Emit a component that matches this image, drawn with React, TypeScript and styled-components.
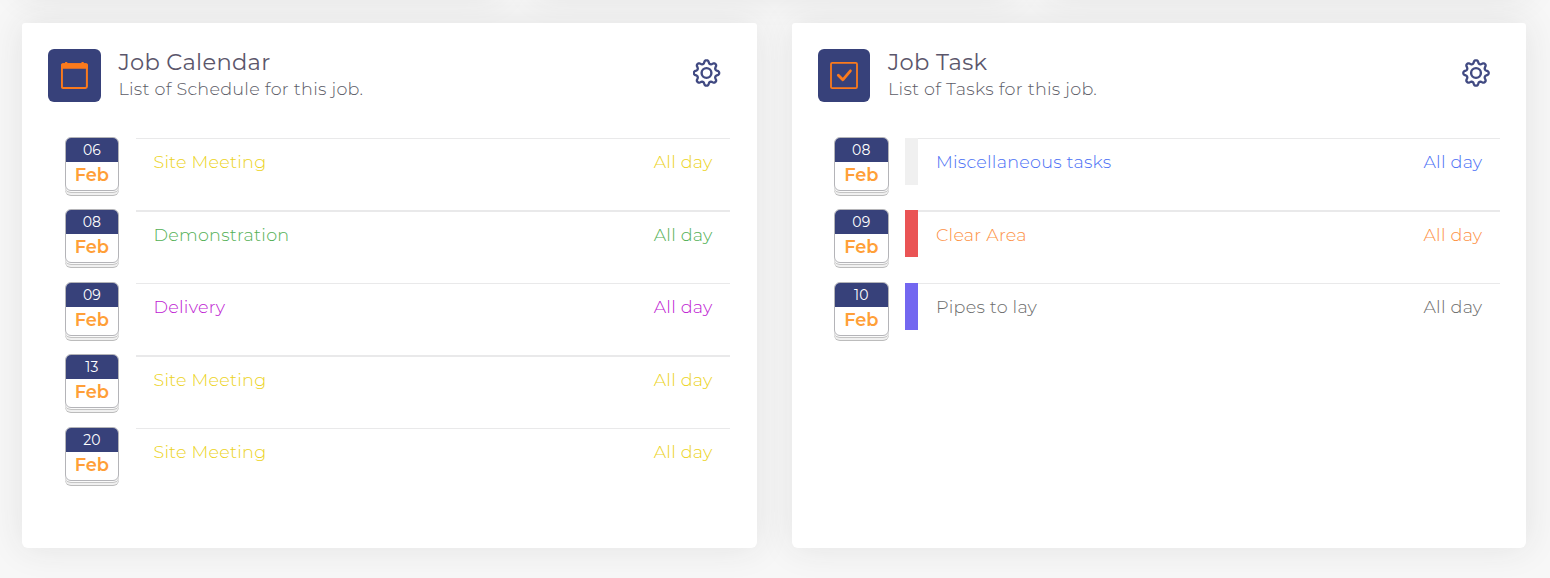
import React from "react";
import styled, { createGlobalStyle } from "styled-components";

const Global = createGlobalStyle`
  *, *::before, *::after { box-sizing: border-box; }
  body {
    margin: 0;
    height: 578px;
    overflow: hidden;
    background: #f7f7f7;
    font-family: Montserrat, Inter, sans-serif;
    font-weight: 300;
  }
`;

const Page = styled.div`
  height: 578px;
  overflow: hidden;
`;

const PreviousRow = styled.div`
  display: flex;
  gap: 35px;
  height: 100px;
  margin-top: -105px;
  padding: 0 24px 0 22px;
`;

const PreviousCard = styled.div`
  flex: 1;
  box-shadow: 0 0 35px rgba(50, 50, 50, 0.1);
`;

const Cards = styled.main`
  display: grid;
  grid-template-columns: 735px 734px;
  gap: 35px;
  padding: 28px 0 0 22px;
`;

const Card = styled.section`
  height: 525px;
  border-radius: 3px 3px 6px 6px;
  background: #fff;
  box-shadow: 0 0 35px rgba(50, 50, 50, 0.1);
`;

const CardHeader = styled.header<{ $end: number }>`
  display: flex;
  height: 113.9px;
  padding: 26px ${(p) => p.$end}px 0 26px;
`;

const IconTile = styled.div<{ $width: number }>`
  display: grid;
  place-items: center;
  width: ${(p) => p.$width}px;
  height: 53px;
  border-radius: 6px;
  background: #37417a;
`;

const Heading = styled.div<{ $gap: number }>`
  flex: 1;
  margin-left: ${(p) => p.$gap}px;
`;

const Title = styled.h2`
  margin: 0;
  color: #5b566b;
  font-size: 22.6px;
  font-weight: 400;
  line-height: 27px;
  letter-spacing: 0.3px;
  white-space: nowrap;
`;

const Subtitle = styled.p`
  margin: 0;
  color: #5c5c67;
  font-size: 17.6px;
  line-height: 26px;
  letter-spacing: 0.26px;
  white-space: nowrap;
`;

const SettingsButton = styled.button`
  width: 28px;
  height: 28px;
  margin: 10px 0 0;
  padding: 0;
  border: 0;
  background: none;
`;

const Row = styled.div<{ $start: number; $end: number }>`
  display: flex;
  height: 72.5px;
  padding: 0 ${(p) => p.$end}px 0 ${(p) => p.$start}px;
`;

const DateStack = styled.div`
  width: 54.6px;
  height: 59px;
  margin-right: 16.8px;
`;

const DateSheet = styled.div`
  height: 54px;
  overflow: hidden;
  border: 1px solid #b4b4b8;
  border-radius: 6px;
  background: #fff;
  text-align: center;
  box-shadow: 0 1px 0 #fafafa, 0 2px 0 #c4c4c4, 0 4px 0 #f0f0f0, 0 5px 0 #bcbcbc;
`;

const Day = styled.div`
  height: 24px;
  background: #37417a;
  color: #fff;
  font-size: 14px;
  font-weight: 400;
  line-height: 24px;
  letter-spacing: 0.1px;
`;

const Month = styled.div`
  color: #ff9f38;
  font-size: 17.8px;
  font-weight: 600;
  line-height: 26.2px;
`;

const Entry = styled.div`
  display: flex;
  flex: 1;
  align-items: flex-start;
  margin-top: 1px;
`;

const Marker = styled.div<{ $color: string }>`
  width: 13px;
  height: 47px;
  background: ${(p) => p.$color};
`;

const EntryBody = styled.div`
  flex: 1;
`;

const Rule = styled.div`
  height: 1.3px;
  background: #e9e9ea;
`;

const EntryText = styled.div<{ $color: string }>`
  display: flex;
  justify-content: space-between;
  padding: 10.05px 17.5px 0;
  color: ${(p) => p.$color};
  font-size: 17.6px;
  line-height: 26px;
  letter-spacing: 0.24px;
  white-space: nowrap;
`;

const gearPath = (() => {
  const points: string[] = [];
  for (let i = 0; i < 160; i++) {
    const a = (i / 160) * Math.PI * 2;
    const c = Math.cos(8 * a);
    const r = 11.15 + (1.55 * Math.tanh(1.3 * c)) / Math.tanh(1.3);
    points.push(`${(14 + r * Math.sin(a)).toFixed(2)} ${(14 - r * Math.cos(a)).toFixed(2)}`);
  }
  return `M${points.join("L")}Z`;
})();

const GearIcon = ({ shift = 0 }: { shift?: number }) => (
  <svg width="28" height="28" viewBox={`${shift} 0 28 28`} fill="none" stroke="#414a82" strokeWidth="2.3" strokeLinejoin="round">
    <path d={gearPath} />
    <circle cx="14" cy="14" r="4.9" strokeWidth="2.4" />
  </svg>
);

const CalendarIcon = () => (
  <svg width="28" height="28" viewBox="0.5 0 28 28" fill="none">
    <rect x="1.4" y="2.2" width="25" height="23.8" rx="1.4" stroke="#fb7a1c" strokeWidth="2" />
    <path d="M.5 6.8V3.1Q.5 1.2 2.4 1.2H4.6V0H6.8V1.2H21V0H23.2V1.2H25.4Q27.4 1.2 27.4 3.1V6.8Z" fill="#fb7a1c" />
  </svg>
);

const TaskIcon = () => (
  <svg width="28" height="28" viewBox="0 0 28 28" fill="none" stroke="#fb7a1c">
    <rect x="1" y="0.9" width="26" height="25.2" rx="1.2" strokeWidth="1.8" />
    <path d="M8.3 13.2L12.8 17.8L20.4 8.8" strokeWidth="2.8" strokeLinecap="round" strokeLinejoin="round" />
  </svg>
);

type Item = { day: string; name: string; color: string; marker?: string };

const schedule: Item[] = [
  { day: "06", name: "Site Meeting", color: "#ecd31c" },
  { day: "08", name: "Demonstration", color: "#53b055" },
  { day: "09", name: "Delivery", color: "#be20d2" },
  { day: "13", name: "Site Meeting", color: "#ecd31c" },
  { day: "20", name: "Site Meeting", color: "#ecd31c" },
];

const tasks: Item[] = [
  { day: "08", name: "Miscellaneous tasks", color: "#4b70f5", marker: "#f0f0f0" },
  { day: "09", name: "Clear Area", color: "#fd9144", marker: "#ea5455" },
  { day: "10", name: "Pipes to lay", color: "#6c6c6c", marker: "#7367f0" },
];

const List = ({ items, start, end }: { items: Item[]; start: number; end: number }) => (
  <>
    {items.map((item, i) => (
      <Row key={i} $start={start} $end={end}>
        <DateStack>
          <DateSheet>
            <Day>{item.day}</Day>
            <Month>Feb</Month>
          </DateSheet>
        </DateStack>
        <Entry>
          {item.marker && <Marker $color={item.marker} />}
          <EntryBody>
            <Rule />
            <EntryText $color={item.color}>
              <span>{item.name}</span>
              <span>All day</span>
            </EntryText>
          </EntryBody>
        </Entry>
      </Row>
    ))}
  </>
);

export default function App() {
  return (
    <Page>
      <Global />
      <PreviousRow>
        <PreviousCard />
        <PreviousCard />
        <PreviousCard />
      </PreviousRow>
      <Cards>
        <Card>
          <CardHeader $end={36.4}>
            <IconTile $width={53}><CalendarIcon /></IconTile>
            <Heading $gap={17.4}>
              <Title>Job Calendar</Title>
              <Subtitle>List of Schedule for this job.</Subtitle>
            </Heading>
            <SettingsButton aria-label="Calendar settings"><GearIcon shift={0.5} /></SettingsButton>
          </CardHeader>
          <List items={schedule} start={42.6} end={27} />
        </Card>
        <Card>
          <CardHeader $end={36.4}>
            <IconTile $width={52}><TaskIcon /></IconTile>
            <Heading $gap={18}>
              <Title>Job Task</Title>
              <Subtitle>List of Tasks for this job.</Subtitle>
            </Heading>
            <SettingsButton aria-label="Task settings"><GearIcon /></SettingsButton>
          </CardHeader>
          <List items={tasks} start={42} end={26.2} />
        </Card>
      </Cards>
    </Page>
  );
}
